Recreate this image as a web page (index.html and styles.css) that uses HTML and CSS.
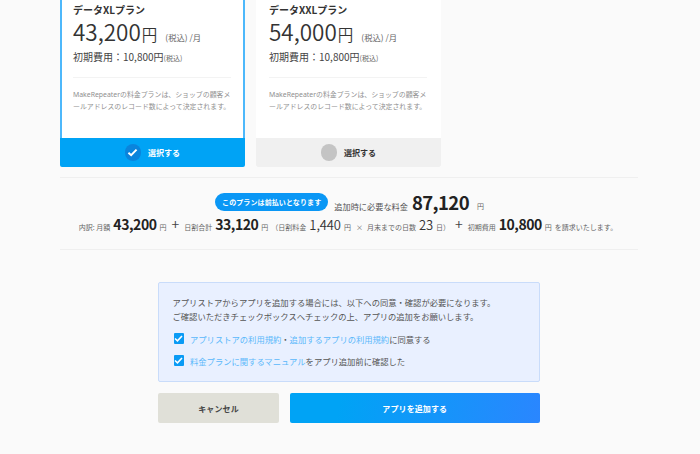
FILE: index.html
```html
<!DOCTYPE html>
<html lang="ja">
<head>
<meta charset="utf-8">
<title>プラン選択</title>
<link rel="stylesheet" href="styles.css">
</head>
<body>
<main class="page">
  <section class="plans">
    <article class="plan plan-selected">
      <div class="plan-body">
        <h3 class="plan-name">データXLプラン</h3>
        <p class="plan-price"><span class="price-num">43,200</span><span class="price-yen">円</span><span class="price-tax">(税込) /月</span></p>
        <p class="plan-init">初期費用：10,800円<small>(税込)</small></p>
        <p class="plan-desc">MakeRepeaterの料金プランは、ショップの顧客メールアドレスのレコード数によって決定されます。</p>
      </div>
      <div class="plan-select select-on">
        <span class="select-dot dot-on"><svg width="11" height="9" viewBox="0 0 12 10"><path d="M1.5 5.2 4.5 8 10.5 1.8" fill="none" stroke="#fff" stroke-width="2.2"/></svg></span>
        <span>選択する</span>
      </div>
    </article>
    <article class="plan">
      <div class="plan-body">
        <h3 class="plan-name">データXXLプラン</h3>
        <p class="plan-price"><span class="price-num">54,000</span><span class="price-yen">円</span><span class="price-tax">(税込) /月</span></p>
        <p class="plan-init">初期費用：10,800円<small>(税込)</small></p>
        <p class="plan-desc">MakeRepeaterの料金プランは、ショップの顧客メールアドレスのレコード数によって決定されます。</p>
      </div>
      <div class="plan-select select-off">
        <span class="select-dot dot-off"></span>
        <span>選択する</span>
      </div>
    </article>
  </section>

  <section class="summary">
    <div class="summary-total">
      <span class="prepaid">このプランは前払いとなります</span>
      <span class="total-label">追加時に必要な料金</span>
      <b class="total-num">87,120</b>
      <span class="lab-s total-yen">円</span>
    </div>
    <div class="summary-detail">
      <span class="lab-s">内訳: 月額</span><b class="num">43,200</b><span class="lab-s">円</span>
      <span class="plus">+</span>
      <span class="lab-s">日割合計</span><b class="num">33,120</b><span class="lab-s">円</span>
      <span class="lab-s">（日割料金</span><span class="num-light">1,440</span><span class="lab-s">円</span>
      <span class="lab-s times">×</span>
      <span class="lab-s">月末までの日数</span><span class="num-light">23</span><span class="lab-s">日）</span>
      <span class="plus">+</span>
      <span class="lab-s">初期費用</span><b class="num">10,800</b><span class="lab-s">円</span>
      <span class="lab-s">を請求いたします。</span>
    </div>
  </section>

  <section class="consent">
    <p class="consent-text">アプリストアからアプリを追加する場合には、以下への同意・確認が必要になります。<br>ご確認いただきチェックボックスへチェックの上、アプリの追加をお願いします。</p>
    <label class="check-row">
      <span class="check"><svg width="9" height="7" viewBox="0 0 10 8"><path d="M1 4 3.8 6.6 9 1.2" fill="none" stroke="#fff" stroke-width="1.8"/></svg></span>
      <span><a class="link">アプリストアの利用規約</a>・<a class="link">追加するアプリの利用規約</a>に同意する</span>
    </label>
    <label class="check-row">
      <span class="check"><svg width="9" height="7" viewBox="0 0 10 8"><path d="M1 4 3.8 6.6 9 1.2" fill="none" stroke="#fff" stroke-width="1.8"/></svg></span>
      <span><a class="link">料金プランに関するマニュアル</a>をアプリ追加前に確認した</span>
    </label>
  </section>

  <div class="actions">
    <button class="btn btn-cancel">キャンセル</button>
    <button class="btn btn-add">アプリを追加する</button>
  </div>
</main>
</body>
</html>
```
FILE: styles.css
```css
* { box-sizing: border-box; }
html, body { margin: 0; padding: 0; height: 100%; }
body {
  background: #fafafa;
  color: #333;
  font-family: "Noto Sans CJK JP", "Noto Sans", sans-serif;
  overflow: hidden;
}
p, h3 { margin: 0; }
.page { width: 700px; height: 454px; padding: 0 62px 0 60px; display: flex; flex-direction: column; }

.plans { display: flex; gap: 11.5px; }
.plan { width: 184.5px; height: 166.7px; background: #fff; display: flex; flex-direction: column; }
.plan-body { flex: 1; padding: 0 12px 0 11px; border: 2px solid transparent; border-top: 0; border-bottom: 0; }
.plan-selected .plan-body { border-color: #4db8fb; }
.plan-name { font-size: 10px; line-height: 20px; font-weight: 700; color: #333; height: 19px; }
.plan-price { display: flex; align-items: baseline; height: 25px; color: #333; white-space: nowrap; }
.price-num { font-size: 22.5px; line-height: 25px; font-weight: 350; }
.price-yen { font-size: 15.5px; line-height: 25px; font-weight: 350; margin-left: 1px; }
.price-tax { font-size: 8.3px; line-height: 25px; color: #666; margin-left: 8px; }
.plan-init { font-size: 10px; line-height: 16px; margin-top: 5px; color: #444; white-space: nowrap; }
.plan-init small { font-size: 7px; color: #666; }
.plan-desc { margin-top: 11px; padding-top: 11px; border-top: 1px solid #f3f3f3; font-family: "Noto Sans", "Noto Sans CJK JP", sans-serif; font-size: 6.9px; line-height: 12px; color: #8f8f8f; }
.plan-select { height: 28.7px; flex: none; display: flex; align-items: center; justify-content: center; gap: 7px; font-size: 8px; font-weight: 700; }
.select-on { background: #00a3f5; color: #fff; border-radius: 0 0 2px 2px; }
.select-off { background: #f0f0f0; color: #333; border-radius: 0 0 2px 2px; }
.select-dot { width: 16.5px; height: 16.5px; border-radius: 50%; display: flex; align-items: center; justify-content: center; }
.dot-on { background: #0a84dc; }
.dot-off { background: #c4c4c4; }

.summary { margin-top: 10.5px; height: 72.5px; border-top: 1.5px solid #efefef; border-bottom: 1.5px solid #efefef; width: 578px; }
.summary-total { display: flex; align-items: flex-end; justify-content: center; height: 36px; gap: 4px; padding-left: 1px; }
.prepaid { background: #0a97f5; color: #fff; font-size: 7px; font-weight: 700; line-height: 18px; height: 18px; padding: 0 7px; border-radius: 9px; margin: 0 2px 3px 0; letter-spacing: .1px; }
.total-label { font-size: 8.2px; line-height: 12px; color: #555; margin-bottom: 2px; }
.total-num { font-size: 18.5px; line-height: 24px; color: #222; letter-spacing: -.6px; }
.lab-s { font-size: 7px; color: #666; }
.total-yen { margin: 0 0 2px 4px; line-height: 12px; }
.summary-detail { display: flex; align-items: baseline; justify-content: center; gap: 3px; height: 24px; white-space: nowrap; padding-right: 2px; }
.num { font-size: 14px; color: #222; letter-spacing: -.45px; }
.num-light { font-size: 13px; font-weight: 350; color: #333; letter-spacing: -.1px; }
.plus { font-size: 14px; font-weight: 350; color: #444; margin: 0 2px; }
.times { margin: 0 1px 0 2px; }

.consent { margin: 32.3px 0 0 98px; width: 381.5px; height: 100.5px; padding: 13.2px 13.5px; background: #e9f0ff; border: 1px solid #c9dcfa; border-radius: 2px; font-size: 8.3px; color: #555; }
.consent-text { line-height: 13.5px; white-space: nowrap; }
.check-row { display: flex; align-items: center; gap: 6px; height: 22px; }
.consent-text + .check-row { margin-top: 4.5px; }
.check { width: 10.5px; height: 10.5px; background: #0a9bf5; display: flex; align-items: center; justify-content: center; border-radius: 1px; margin-left: 1px; }
.link { color: #5ab8fb; }

.actions { display: flex; gap: 11px; margin: 10.5px 0 0 98px; width: 381.5px; }
.btn { border: 0; height: 30.5px; font-family: inherit; font-size: 8px; font-weight: 700; border-radius: 2px; padding: 0; letter-spacing: .1px; }
.btn-cancel { width: 121px; background: #e0e0d8; color: #444; }
.btn-add { flex: 1; background: linear-gradient(100deg, #00a3f5 20%, #2a86ff 100%); color: #fff; }
```
